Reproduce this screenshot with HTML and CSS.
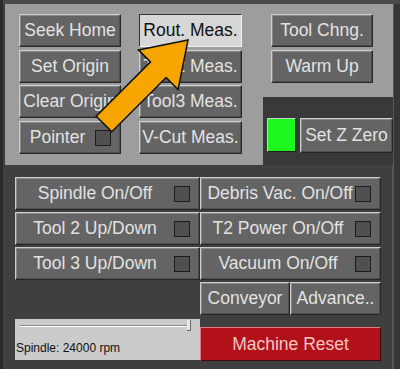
FILE: index.html
```html
<!DOCTYPE html>
<html lang="en">
<head>
    <meta charset="UTF-8">
    <meta name="viewport" content="width=device-width, initial-scale=1.0">
    <title>Machine Control</title>
    <link rel="stylesheet" href="styles.css">
</head>
<body>
    <div id="window">
        <div class="top">
            <div class="panel main-panel">
                <button class="btn">Seek Home</button>
                <button class="btn active">Rout. Meas.</button>
                <button class="btn">Set Origin</button>
                <button class="btn">Tool2 Meas.</button>
                <button class="btn">Clear Origin</button>
                <button class="btn">Tool3 Meas.</button>
                <button class="btn check"><span class="label">Pointer</span><span class="box"></span></button>
                <button class="btn">V-Cut Meas.</button>
            </div>
            <div class="side">
                <div class="panel side-panel">
                    <button class="btn">Tool Chng.</button>
                    <button class="btn">Warm Up</button>
                </div>
                <div class="zero-row">
                    <span class="led"></span>
                    <button class="btn zero">Set Z Zero</button>
                </div>
            </div>
        </div>

        <div class="bottom">
            <div class="col left-col">
                <button class="btn check"><span class="label">Spindle On/Off</span><span class="box"></span></button>
                <button class="btn check"><span class="label">Tool 2 Up/Down</span><span class="box"></span></button>
                <button class="btn check"><span class="label">Tool 3 Up/Down</span><span class="box"></span></button>
                <div class="slider-panel">
                    <div class="track"><span class="thumb"></span></div>
                    <div class="slider-label">Spindle: 24000 rpm</div>
                </div>
            </div>
            <div class="col right-col">
                <button class="btn check tight"><span class="label">Debris Vac. On/Off</span><span class="box"></span></button>
                <button class="btn check"><span class="label">T2 Power On/Off</span><span class="box"></span></button>
                <button class="btn check"><span class="label">Vacuum On/Off</span><span class="box"></span></button>
                <div class="split">
                    <button class="btn">Conveyor</button>
                    <button class="btn">Advance..</button>
                </div>
                <button class="btn reset">Machine Reset</button>
            </div>
        </div>

        <svg class="arrow" width="400" height="369" viewBox="0 0 400 369">
            <polygon points="188,40 178.1,89.5 166.1,77.5 111.8,131.8 96.2,116.2 150.5,61.9 138.5,49.9"
                     fill="#f7a600" stroke="#111" stroke-width="1.5" stroke-linejoin="miter"/>
        </svg>
    </div>
</body>
</html>
```

FILE: styles.css
```css
body {
    margin: 0;
    background-color: #3f3f3f;
    font-family: "Liberation Sans", Arial, sans-serif;
}

#window {
    position: relative;
    width: 400px;
    height: 369px;
    box-sizing: border-box;
    padding: 4px 0 0 5px;
    background-color: #3f3f3f;
    box-shadow: inset 3px 0 #2b2b2b, inset 0 4px #4b4b4b, inset -6px 0 #363636, inset -8px 0 #575757;
    overflow: hidden;
}

.btn {
    display: flex;
    align-items: center;
    justify-content: center;
    box-sizing: border-box;
    height: 33px;
    padding: 0;
    margin: 0;
    background-color: #646464;
    color: #e2e2e2;
    font-family: "Liberation Sans", Arial, sans-serif;
    font-size: 17.5px;
    white-space: nowrap;
    overflow: hidden;
    border: 1px solid;
    border-color: #cdcdcd #262626 #262626 #cdcdcd;
    box-shadow: inset -1px -1px #4e4e4e, inset 1px 1px #8a8a8a;
}

.btn.active {
    background-color: #d7d7d7;
    color: #111;
    border-color: #333 #f2f2f2 #f2f2f2 #333;
    box-shadow: none;
}

.btn.check .label {
    flex: 1;
    text-align: center;
}

.box {
    flex: none;
    width: 14px;
    height: 14px;
    margin-right: 9px;
    background-color: #505050;
    border: 1px solid #1c1c1c;
}

.btn.tight .box {
    margin-left: -4px;
}

.panel {
    background-color: #9d9d9d;
}

.top {
    display: flex;
    height: 161px;
}

.main-panel {
    width: 258px;
    box-sizing: border-box;
    padding: 10px 0 0 14px;
    display: grid;
    grid-template-columns: 102px 103px;
    grid-auto-rows: 33px;
    column-gap: 18px;
    row-gap: 2.7px;
}

.side {
    width: 130px;
    display: flex;
    flex-direction: column;
}

.side-panel {
    height: 93px;
    box-sizing: border-box;
    padding: 10px 0 0 8px;
    display: flex;
    flex-direction: column;
    gap: 3px;
}

.side-panel .btn {
    width: 102px;
}

.zero-row {
    display: flex;
    gap: 4px;
    padding: 21px 0 0 4px;
    background-color: #393939;
    flex: 1;
}

.led {
    width: 29px;
    height: 34px;
    box-sizing: border-box;
    background-color: #1ef71e;
    border: 1px solid;
    border-color: #d0d0d0 #1a1a1a #1a1a1a #d0d0d0;
}

.btn.zero {
    width: 93px;
    height: 35px;
}

.bottom {
    display: flex;
    margin: 12px 0 0 10px;
}

.col {
    display: flex;
    flex-direction: column;
    gap: 2px;
}

.left-col {
    width: 185px;
}

.right-col {
    width: 181px;
}

.split {
    display: flex;
}

.split .btn:first-child {
    width: 90px;
}

.split .btn:last-child {
    flex: 1;
}

.btn.reset {
    margin-top: 10px;
    height: 34px;
    background-color: #b3111a;
    color: #f5c6c6;
    border-color: #e07a7a #3a0a0a #3a0a0a #e07a7a;
    box-shadow: none;
}

.slider-panel {
    margin-top: 37px;
    height: 41px;
    background-color: #cbcbcb;
    box-sizing: border-box;
    padding: 5px 0 0 5px;
}

.track {
    position: relative;
    width: 171px;
    height: 1px;
    margin-top: 1px;
    border-top: 1px solid #8a8a8a;
    background-color: #ffffff;
}

.thumb {
    position: absolute;
    left: 167px;
    top: -6px;
    width: 3px;
    height: 10px;
    background-color: #e8e8e8;
    border-right: 1px solid #6a6a6a;
    border-bottom: 1px solid #6a6a6a;
}

.slider-label {
    margin: 14px 0 0 -4px;
    font-size: 12px;
    color: #111;
}

.arrow {
    position: absolute;
    left: 0;
    top: 0;
    pointer-events: none;
}
```
